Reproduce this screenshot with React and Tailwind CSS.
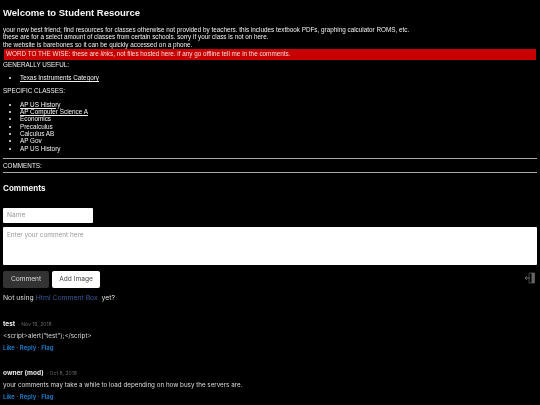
const resources = ['AP US History', 'AP Computer Science A'];
const classes = ['Economics', 'Precalculus', 'Calculus AB', 'AP Gov', 'AP US History'];

const comments = [
  { name: 'test', date: 'Nov 19, 2018', body: '<script>alert("test");</script>' },
  { name: 'owner (mod)', date: 'Oct 8, 2018', body: 'your comments may take a while to load depending on how busy the servers are.' },
];

const Comment = ({ name, date, body }) => (
  <div className="h-[49px] font-['Inter',sans-serif]">
    <div className="flex items-baseline gap-[3px] h-[11px] leading-[11px]">
      <span className="text-[6.5px] font-bold text-[#eee]">{name}</span>
      <span className="text-[5.1px] text-[#666]">· {date}</span>
    </div>
    <div className="mt-[0.5px] h-[11px] leading-[11px] text-[6.25px] text-[#ddd]">{body}</div>
    <div className="mt-[0.5px] h-[11px] leading-[11px] text-[6px] font-bold text-[#1c74bb]">
      Like <span className="text-[#666]">·</span> Reply <span className="text-[#666]">·</span> Flag
    </div>
  </div>
);

export default function App() {
  return (
    <div className="w-[540px] h-[405px] overflow-hidden bg-black">
      <div className="blur-[0.25px] text-[#f0f0f0] px-[3px] font-['Liberation_Sans',sans-serif] text-[6.35px] leading-[7.35px]">
        <h1 className="pt-[7px] h-[26px] text-[9.5px] leading-[12px] font-bold text-[#f4f4f4]">Welcome to Student Resource</h1>

        <p>your new best friend; find resources for classes otherwise not provided by teachers. this includes textbook PDFs, graphing calculator ROMS, etc.</p>
        <p>these are for a select amount of classes from certain schools. sorry if your class is not on here.</p>
        <p>the website is barebones so it can be quickly accessed on a phone.</p>

        <div className="mt-[1px] mx-[1px] h-[10.500px] leading-[10.500px] bg-[#c80000] px-[2px] text-[#f4d8d8]">
          WORD TO THE WISE: these are <em>links</em>, not files hosted here. if any go offline tell me in the comments.
        </div>

        <p className="mt-[1px]">GENERALLY USEFUL:</p>
        <ul className="list-disc pl-[17px] my-[6px]">
          <li><a className="underline">Texas Instruments Category</a></li>
        </ul>

        <p>SPECIFIC CLASSES:</p>
        <ul className="list-disc pl-[17px] mt-[6px]">
          {resources.map(r => (
            <li key={r}><a className="underline">{r}</a></li>
          ))}
          {classes.map(c => (
            <li key={c}>{c}</li>
          ))}
        </ul>

        <hr className="mt-[6px] border-t-[1px] border-[#aaa]" />
        <p className="mt-[3px]">COMMENTS:</p>
        <hr className="mt-[3px] border-t-[1px] border-[#aaa]" />

        <h2 className="mt-[8.500px] h-[12px] font-['Inter',sans-serif] text-[8px] leading-[12px] font-bold text-[#f4f4f4]">Comments</h2>

        <div className="mt-[14.500px] w-[90px] h-[15px] bg-white rounded-[1px] px-[4px] font-['Inter',sans-serif] text-[6.6px] leading-[15px] text-[#999]">Name</div>
        <div className="mt-[4px] h-[38px] bg-white rounded-[1px] px-[4px] pt-[3px] font-['Inter',sans-serif] text-[6.4px] leading-[10px] text-[#999]">Enter your comment here</div>

        <div className="mt-[6px] flex items-start justify-between font-['Inter',sans-serif]">
          <div className="flex gap-[3px]">
            <button className="w-[46px] h-[17px] bg-[#333] rounded-[2px] text-[6.6px] text-[#ddd]">Comment</button>
            <button className="w-[48px] h-[17px] bg-white rounded-[2px] text-[6.6px] text-[#444]">Add Image</button>
          </div>
          <svg width="12" height="12" viewBox="0 0 12 12" className="mr-[1px] mt-[1px]">
            <path d="M5 1h5.500v10H5z" fill="none" stroke="#555" strokeWidth=".8" />
            <path d="M7.500 1h3v10h-3z" fill="#666" />
            <path d="M1 6h5M3 4.200 1 6l2 1.800" stroke="#666" strokeWidth="1" fill="none" />
          </svg>
        </div>

        <p className="mt-[4px] h-[11px] font-['Inter',sans-serif] text-[6.8px] leading-[11px] text-[#ddd]">
          Not using <span className="text-[#3b5998]">Html Comment Box</span>&nbsp; yet?
        </p>

        <div className="mt-[16px]">
          {comments.map(c => (
            <Comment key={c.name} {...c} />
          ))}
        </div>
      </div>
    </div>
  );
}
